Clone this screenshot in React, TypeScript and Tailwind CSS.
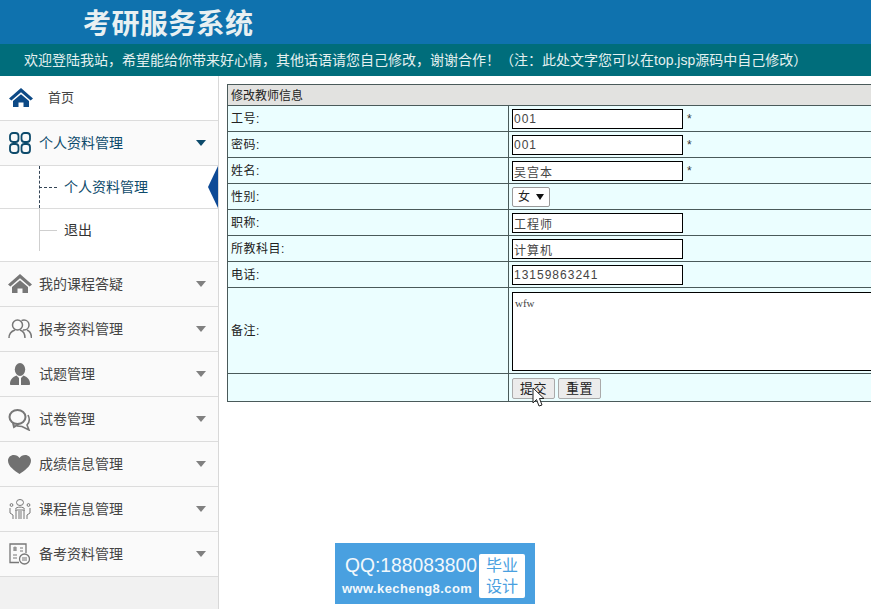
import React from "react";

const cjk = '"Liberation Sans", "Noto Sans CJK SC", sans-serif';

const Home = ({ c }: { c: string }) => (
  <svg width="24" height="20" viewBox="0 0 24 20" fill={c}>
    <path d="M12 0 L24 10.5 L21.6 12.6 L12 4.2 L2.4 12.6 L0 10.5 Z" />
    <path d="M12 6.2 L20 13 V19 H14.5 V14.5 H9.5 V19 H4 V13 Z" />
  </svg>
);
const Grid = () => (
  <svg width="22" height="22" viewBox="0 0 22 22" fill="none" stroke="#0d4a6b" strokeWidth="1.8">
    <rect x="1" y="1" width="8.5" height="9" rx="3" />
    <rect x="12.5" y="1" width="8.5" height="9" rx="3" />
    <rect x="1" y="12" width="8.5" height="9" rx="3" />
    <rect x="12.5" y="12" width="8.5" height="9" rx="3" />
  </svg>
);
const Users = () => (
  <svg width="24" height="20" viewBox="0 0 24 20" fill="none" stroke="#777" strokeWidth="1.5">
    <circle cx="9.5" cy="6" r="5" />
    <path d="M13.5 1.6 C14.2 1.2 15 1 16 1 C18.8 1 21 3.2 21 6 C21 8.8 18.8 11 16 11 C15.6 11 15.2 11 14.8 10.9" />
    <path d="M1 19 C1 14 4 12 7 11 M12 11 C15 12 17 14 17 19 M19 11 C21.5 12 23.5 15 23.5 19" />
  </svg>
);
const Person = () => (
  <svg width="20" height="23" viewBox="0 0 20 23" fill="#717171">
    <ellipse cx="10" cy="6.5" rx="5.2" ry="6.5" />
    <path d="M6.5 12.5 L9 15 V22 H1 C0.4 22 0 21.5 0 21 C0 17 2 14.5 6.5 12.5 Z" />
    <path d="M13.5 12.5 L11 15 V22 H19 C19.6 22 20 21.5 20 21 C20 17 18 14.5 13.5 12.5 Z" />
  </svg>
);
const Chat = () => (
  <svg width="23" height="23" viewBox="0 0 23 23" fill="none" stroke="#777" strokeWidth="2">
    <ellipse cx="9.5" cy="9" rx="8" ry="7" />
    <path d="M5 15 L6 19 L11 16" />
    <path d="M20 7 C22 11 21 15 19 17 L21 22 L14 18.5 L9 18" strokeWidth="1.6" />
  </svg>
);
const Heart = () => (
  <svg width="23" height="19" viewBox="0 0 23 19" fill="#717171">
    <path d="M11.5 19 C7 16 0 11.5 0 5.8 C0 2.4 2.6 0 5.8 0 C8.2 0 10.3 1 11.5 3 C12.7 1 14.8 0 17.2 0 C20.4 0 23 2.4 23 5.8 C23 11.5 16 16 11.5 19 Z" />
  </svg>
);
const Meeting = () => (
  <svg width="22" height="22" viewBox="0 0 22 22" fill="none" stroke="#777" strokeWidth="1">
    <ellipse cx="11" cy="4.5" rx="3.5" ry="3" />
    <path d="M6.5 11 C7 8.5 15 8.5 15.5 11" />
    <path d="M6 12 H16 M7 12 V21 M10 13 V21 M12 13 V21 M15 12 V21" />
    <circle cx="2.5" cy="7" r="1.4" />
    <circle cx="19.5" cy="7" r="1.4" />
    <path d="M1 10 V15 L4 17 V21 M21 10 V15 L18 17 V21" />
  </svg>
);
const Doc = () => (
  <svg width="21" height="22" viewBox="0 0 21 22" fill="none" stroke="#777" strokeWidth="1">
    <path d="M10 19.5 H1 V1 H17 V10" strokeWidth="1.3" />
    <path d="M4 5 H8 M6 3.5 V8 M4 7 H8 M11 5 H14 M11 8 H14 M4 12 H8 M4 15 H8" />
    <circle cx="15.5" cy="16" r="5" strokeWidth="1.3" />
    <path d="M13 15 H18 M13 17 H18" />
  </svg>
);

const Caret = ({ c }: { c: string }) => (
  <svg width="10" height="6" viewBox="0 0 10 6" fill={c} className="mr-[12px] ml-auto shrink-0">
    <path d="M0 0 H10 L5 6 Z" />
  </svg>
);

const MenuRow = ({ icon, label }: { icon: React.ReactNode; label: string }) => (
  <div className="flex h-[45px] items-center border-b border-[#dcdcdc] text-[#444] bg-[#fafafa]">
    <div className="flex w-[39px] shrink-0 justify-center">{icon}</div>
    <span className="text-[14px]">{label}</span>
    <Caret c="#808080" />
  </div>
);

const rows = [
  { label: "工号:", value: "001", star: true },
  { label: "密码:", value: "001", star: true },
  { label: "姓名:", value: "吴宫本", star: true },
];
const rows2 = [
  { label: "职称:", value: "工程师" },
  { label: "所教科目:", value: "计算机" },
  { label: "电话:", value: "13159863241" },
];

const labelTd = "border border-[#4a5a5a] pl-[3px] pt-[1px] text-[12px] text-[#222] tracking-[0.5px]";
const valueTd = "border border-[#4a5a5a] pl-[3px] pt-[1px] text-[12px] text-[#333]";
const inputCls =
  "block h-[20px] w-[171px] border border-black bg-white px-[1px] text-[12px] tracking-[1px] text-[#444] outline-none";

const Field = ({ value, star }: { value: string; star?: boolean }) => (
  <div className="flex items-center gap-[4px]">
    <input readOnly value={value} className={inputCls} style={{ fontFamily: cjk }} />
    {star && <span className="text-[12px] text-[#333]">*</span>}
  </div>
);

export default function App() {
  return (
    <div className="relative h-[609px] w-[871px] overflow-hidden bg-white" style={{ fontFamily: cjk }}>
      <header className="flex h-[44px] items-center bg-[#0f72ae] pl-[83px] pt-[6px]">
        <h1 className="text-[28px] font-bold leading-none tracking-[0.4px] text-[#e8f0f2]">考研服务系统</h1>
      </header>
      <div className="flex h-[32px] items-center whitespace-pre bg-[#006d7b] pl-[24px] text-[14px] text-[#e4f0f0]">
        欢迎登陆我站，希望能给你带来好心情，其他话语请您自己修改，谢谢合作！（注：此处文字您可以在top.jsp源码中自己修改）
      </div>
      <div className="flex h-[533px]">
        <aside className="w-[219px] shrink-0 border-r border-[#d8d8d8] bg-[#f1f1f1]">
          <div className="flex h-[45px] items-center border-b border-[#dcdcdc] bg-white text-[#444]">
            <div className="flex w-[40px] shrink-0 justify-center pl-[1px]">
              <Home c="#0d4a86" />
            </div>
            <span className="ml-[8px] text-[13px]">首页</span>
          </div>
          <div className="flex h-[45px] items-center border-b border-[#dcdcdc] bg-[#fafafa] text-[#0d4a6b]">
            <div className="flex w-[39px] shrink-0 justify-center">
              <Grid />
            </div>
            <span className="text-[14px]">个人资料管理</span>
            <Caret c="#0d4a6b" />
          </div>
          <div className="bg-white">
            <div className="relative flex h-[43px] items-center border-b border-[#dcdcdc] pl-[64px] text-[14px] text-[#0d4a6b]">
              <div className="absolute bottom-0 left-[39px] top-0 border-l border-dashed border-[#345]" />
              <div className="absolute left-[39px] top-[21px] w-[18px] border-t border-dashed border-[#345]" />
              个人资料管理
              <svg width="10" height="42" viewBox="0 0 10 42" fill="#0d4a96" className="absolute right-0 top-0">
                <path d="M10 0 V42 L0 21 Z" />
              </svg>
            </div>
            <div className="relative flex h-[53px] items-start border-b border-[#dcdcdc] pl-[64px] pt-[11px] text-[14px] text-[#333]">
              <div className="absolute left-[39px] top-0 h-[42px] border-l border-[#cfcfcf]" />
              <div className="absolute left-[39px] top-[21px] w-[18px] border-t border-[#cfcfcf]" />
              退出
            </div>
          </div>
          <MenuRow icon={<Home c="#777" />} label="我的课程答疑" />
          <MenuRow icon={<Users />} label="报考资料管理" />
          <MenuRow icon={<Person />} label="试题管理" />
          <MenuRow icon={<Chat />} label="试卷管理" />
          <MenuRow icon={<Heart />} label="成绩信息管理" />
          <MenuRow icon={<Meeting />} label="课程信息管理" />
          <MenuRow icon={<Doc />} label="备考资料管理" />
        </aside>
        <main className="min-w-0 flex-1 pl-[8px] pt-[8px]">
          <table className="w-[720px] table-fixed border-collapse border border-[#222] bg-[#ebfeff]">
            <colgroup>
              <col className="w-[281px]" />
              <col />
            </colgroup>
            <tbody>
              <tr className="h-[21px] bg-[#e2e2e0]">
                <td colSpan={2} className={labelTd + " tracking-normal"}>修改教师信息</td>
              </tr>
              {rows.map((r) => (
                <tr key={r.label} className="h-[26px]">
                  <td className={labelTd}>{r.label}</td>
                  <td className={valueTd}><Field value={r.value} star={r.star} /></td>
                </tr>
              ))}
              <tr className="h-[26px]">
                <td className={labelTd}>性别:</td>
                <td className={valueTd}>
                  <div className="flex h-[20px] w-[38px] items-center justify-center gap-[6px] rounded-[2px] border border-[#999] bg-white text-[12px] text-[#222]">
                    <span>女</span>
                    <svg width="8" height="6" viewBox="0 0 8 6" fill="#111"><path d="M0 0 H8 L4 6 Z" /></svg>
                  </div>
                </td>
              </tr>
              {rows2.map((r) => (
                <tr key={r.label} className="h-[26px]">
                  <td className={labelTd}>{r.label}</td>
                  <td className={valueTd}><Field value={r.value} /></td>
                </tr>
              ))}
              <tr className="h-[86px]">
                <td className={labelTd}>备注:</td>
                <td className={valueTd}>
                  <div
                    className="h-[79px] w-[400px] border border-black bg-white px-[2px] pt-[2px] text-[11px] text-[#444]"
                    style={{ fontFamily: '"Liberation Serif", serif' }}
                  >
                    wfw
                  </div>
                </td>
              </tr>
              <tr className="h-[28px]">
                <td className={labelTd}></td>
                <td className={valueTd}>
                  <div className="flex gap-[3px]">
                    <button className="h-[21px] w-[43px] rounded-[2px] border border-[#aaa] bg-[#ececec] text-[13px] tracking-[0.5px] text-[#222]">提交</button>
                    <button className="h-[21px] w-[43px] rounded-[2px] border border-[#aaa] bg-[#ececec] text-[13px] tracking-[0.5px] text-[#222]">重置</button>
                  </div>
                </td>
              </tr>
            </tbody>
          </table>
        </main>
      </div>

      <svg width="14" height="21" viewBox="0 0 14 21" className="absolute left-[532px] top-[387px]">
        <path d="M1 1 V16 L4.5 12.5 L7 19 L10 18 L7.5 11.5 H12 Z" fill="#fff" stroke="#222" strokeWidth="1" />
      </svg>

      <div className="absolute left-[335px] top-[543px] flex h-[61px] w-[200px] items-center bg-[#49a0e0] pl-[7px] pr-[10px] pt-[5px]">
        <div className="w-[137px] shrink-0 text-[#f2f8fc]">
          <div className="whitespace-nowrap pl-[3px] text-[19.3px] leading-[26px]">QQ:188083800</div>
          <div className="whitespace-nowrap text-[13px] font-bold leading-[20px] tracking-[0.4px]">www.kecheng8.com</div>
        </div>
        <div className="flex h-[44px] w-[46px] shrink-0 flex-col items-center justify-center rounded-[2px] bg-white text-[16px] leading-[21px] text-[#49a0e0]">
          <span>毕业</span>
          <span>设计</span>
        </div>
      </div>
    </div>
  );
}
